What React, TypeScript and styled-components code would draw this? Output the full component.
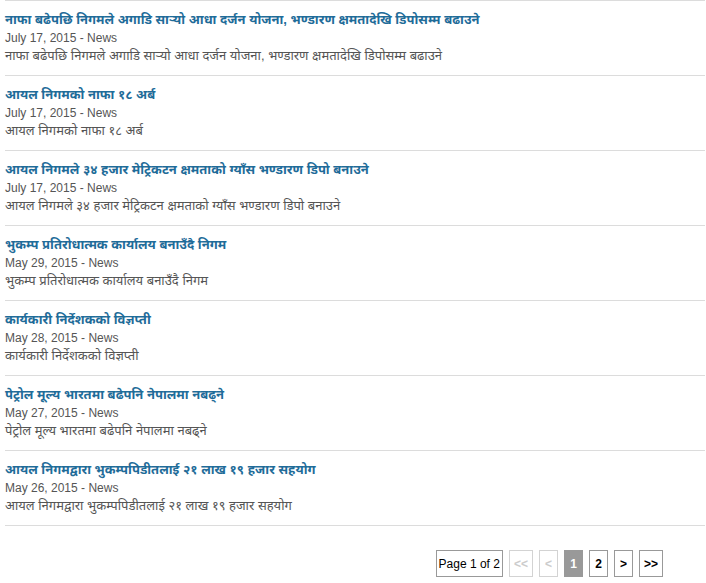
import React from "react";
import styled, { createGlobalStyle } from "styled-components";

const Global = createGlobalStyle`
  html, body { margin: 0; padding: 0; background: #fff; }
  body { font-family: "Liberation Sans", Arial, "Noto Sans", sans-serif; }
`;

const Page = styled.div`
  width: 700px;
  padding: 0 1px 0 5px;
`;

const List = styled.ul`
  list-style: none;
  margin: 0;
  padding: 0;
  border-bottom: 1px solid #dcdcdc;
`;

const Item = styled.li`
  border-top: 1px solid #dcdcdc;
  padding: 10px 0 10px;
  height: 54px;
`;

const Title = styled.a`
  display: block;
  font-size: 13px;
  font-weight: bold;
  line-height: 18px;
  color: #1f6c99;
  text-decoration: none;
`;

const Meta = styled.div`
  font-size: 12px;
  line-height: 18px;
  color: #555;
`;

const Desc = styled.div`
  font-size: 13px;
  line-height: 18px;
  color: #555;
`;

const Pager = styled.div`
  display: flex;
  justify-content: flex-end;
  gap: 6px;
  padding: 24px 42px 0 0;
`;

const PageInfo = styled.span`
  box-sizing: border-box;
  height: 27px;
  padding: 0 2px;
  display: flex;
  align-items: center;
  font-size: 12px;
  color: #000;
  border: 1px solid #999;
`;

const PageBtn = styled.span<{ $state?: "disabled" | "active" | "normal" }>`
  box-sizing: border-box;
  height: 27px;
  min-width: 19px;
  padding: 0 4px;
  display: flex;
  align-items: center;
  justify-content: center;
  font-size: 12px;
  font-weight: bold;
  border: 1px solid ${(p) => (p.$state === "disabled" ? "#d3d3d3" : "#999")};
  background: ${(p) => (p.$state === "active" ? "#999" : "#fff")};
  color: ${(p) => (p.$state === "disabled" ? "#ccc" : p.$state === "active" ? "#fff" : "#000")};
`;

const news = [
  {
    title: "नाफा बढेपछि निगमले अगाडि सार्‍यो आधा दर्जन योजना, भण्डारण क्षमतादेखि डिपोसम्म बढाउने",
    date: "July 17, 2015",
  },
  { title: "आयल निगमको नाफा १८ अर्ब", date: "July 17, 2015" },
  {
    title: "आयल निगमले ३४ हजार मेट्रिकटन क्षमताको ग्याँस भण्डारण डिपो बनाउने",
    date: "July 17, 2015",
  },
  { title: "भुकम्प प्रतिरोधात्मक कार्यालय बनाउँदै निगम", date: "May 29, 2015" },
  { title: "कार्यकारी निर्देशकको विज्ञप्ती", date: "May 28, 2015" },
  { title: "पेट्रोल मूल्य भारतमा बढेपनि नेपालमा नबढ्ने", date: "May 27, 2015" },
  { title: "आयल निगमद्वारा भुकम्पपिडीतलाई २१ लाख १९ हजार सहयोग", date: "May 26, 2015" },
];

export default function App() {
  return (
    <Page>
      <Global />
      <List>
        {news.map((n, i) => (
          <Item key={i}>
            <Title href="#">{n.title}</Title>
            <Meta>{n.date} - News</Meta>
            <Desc>{n.title}</Desc>
          </Item>
        ))}
      </List>
      <Pager>
        <PageInfo>Page 1 of 2</PageInfo>
        <PageBtn $state="disabled">&lt;&lt;</PageBtn>
        <PageBtn $state="disabled">&lt;</PageBtn>
        <PageBtn $state="active">1</PageBtn>
        <PageBtn>2</PageBtn>
        <PageBtn>&gt;</PageBtn>
        <PageBtn>&gt;&gt;</PageBtn>
      </Pager>
    </Page>
  );
}
